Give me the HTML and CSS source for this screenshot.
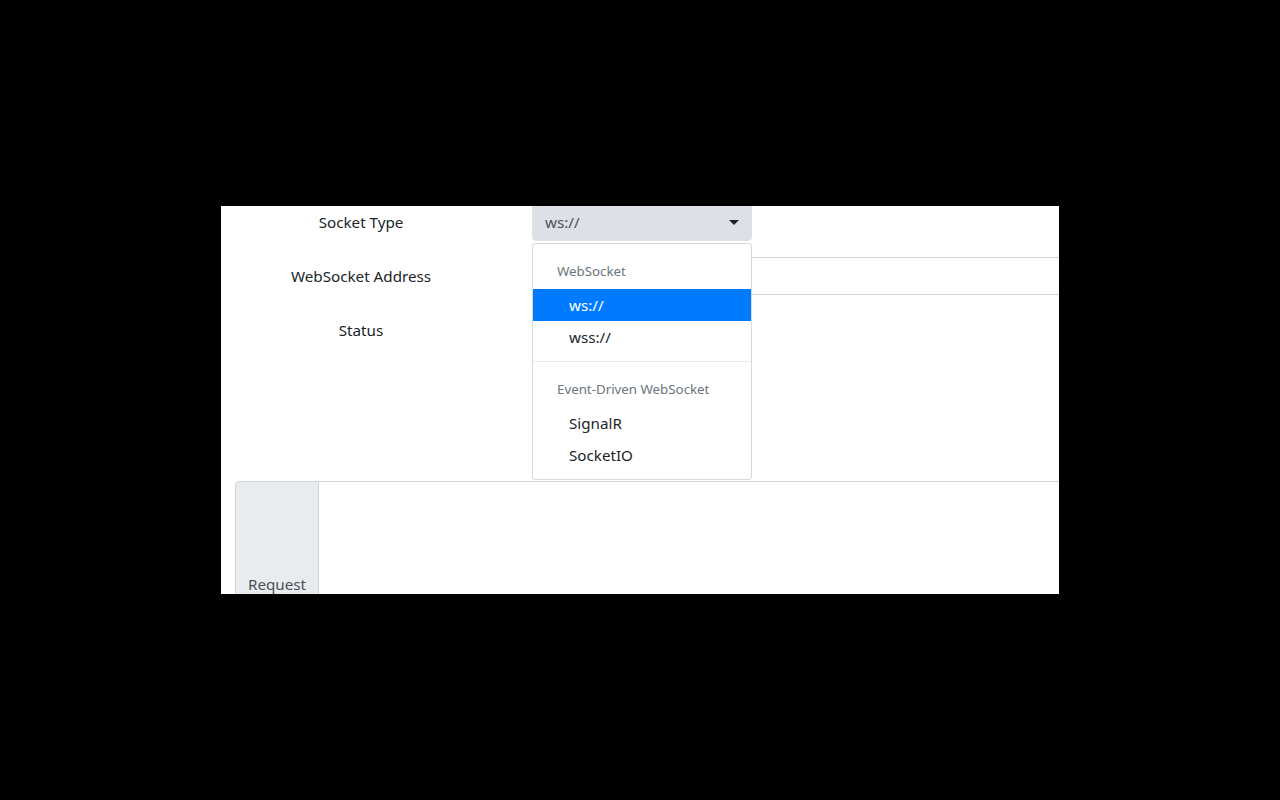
FILE: index.html
```html
<!DOCTYPE html>
<html lang="en">
<head>
<meta charset="utf-8">
<title>WebSocket Client</title>
<link rel="stylesheet" href="styles.css">
</head>
<body>
<div class="frame">
  <div class="content">
    <div class="form-row">
      <label class="col-label">Socket Type</label>
      <div class="control">
        <div class="select-wrap">
          <div class="select">
            <span>ws://</span>
            <span class="caret"></span>
          </div>
          <div class="dropdown-menu">
            <div class="dropdown-header">WebSocket</div>
            <div class="dropdown-item active">ws://</div>
            <div class="dropdown-item">wss://</div>
            <div class="dropdown-divider"></div>
            <div class="dropdown-header">Event-Driven WebSocket</div>
            <div class="dropdown-item">SignalR</div>
            <div class="dropdown-item">SocketIO</div>
          </div>
        </div>
      </div>
    </div>
    <div class="form-row">
      <label class="col-label">WebSocket Address</label>
      <div class="control">
        <div class="text-input"></div>
      </div>
    </div>
    <div class="form-row">
      <label class="col-label">Status</label>
      <div class="control status-area"></div>
    </div>
    <div class="input-group">
      <div class="prepend">Request</div>
      <div class="textarea"></div>
    </div>
  </div>
</div>
</body>
</html>
```
FILE: styles.css
```css
html, body {
  margin: 0;
  background: #000;
}
body {
  font-family: "Noto Sans", "Open Sans", sans-serif;
  font-size: 15.2px;
  line-height: 24px;
  color: #212529;
}
.frame {
  margin: 206px 0 0 221px;
  width: 838px;
  height: 388px;
  overflow: hidden;
  background: #fff;
}
.content {
  width: 1000px;
  margin-top: -3px;
}
.form-row {
  display: grid;
  grid-template-columns: 280px 1fr;
  column-gap: 31px;
  margin-bottom: 16px;
}
.col-label {
  text-align: center;
  padding-top: 7px;
}
.control {
  min-width: 0;
}
.select-wrap {
  position: relative;
  width: 220px;
}
.select {
  height: 38px;
  box-sizing: border-box;
  background: #dde1e7;
  border: 1px solid #dde1e7;
  border-radius: 4px;
  padding: 0 12px;
  display: flex;
  align-items: center;
  justify-content: space-between;
  color: #495057;
}
.caret {
  width: 0;
  height: 0;
  border-left: 5px solid transparent;
  border-right: 5px solid transparent;
  border-top: 5px solid #212529;
  margin-right: 0;
}
.dropdown-menu {
  position: absolute;
  top: 40px;
  left: 0;
  width: 220px;
  box-sizing: border-box;
  background: #fff;
  border: 1px solid rgba(0, 0, 0, 0.15);
  border-radius: 4px;
  padding: 8px 0;
  z-index: 10;
}
.dropdown-header {
  padding: 9px 24px 7px;
  font-size: 13.3px;
  line-height: 21px;
  color: #6c757d;
}
.dropdown-item {
  padding: 4px 24px 4px 36px;
  color: #212529;
}
.dropdown-item.active {
  background: #007bff;
  color: #fff;
}
.dropdown-divider {
  height: 0;
  margin: 8px 0;
  border-top: 1px solid #e9ecef;
}
.text-input {
  height: 38px;
  box-sizing: border-box;
  border: 1px solid #ced4da;
  border-radius: 4px;
}
.status-area {
  height: 154px;
}
.input-group {
  display: flex;
  margin-left: 14px;
  height: 206px;
}
.prepend {
  display: flex;
  align-items: center;
  padding: 0 12px;
  background: #e9ecef;
  border: 1px solid #ced4da;
  border-radius: 4px 0 0 4px;
  color: #495057;
}
.textarea {
  flex: 1;
  border: 1px solid #ced4da;
  border-left: 0;
  border-radius: 0 4px 4px 0;
}
```
